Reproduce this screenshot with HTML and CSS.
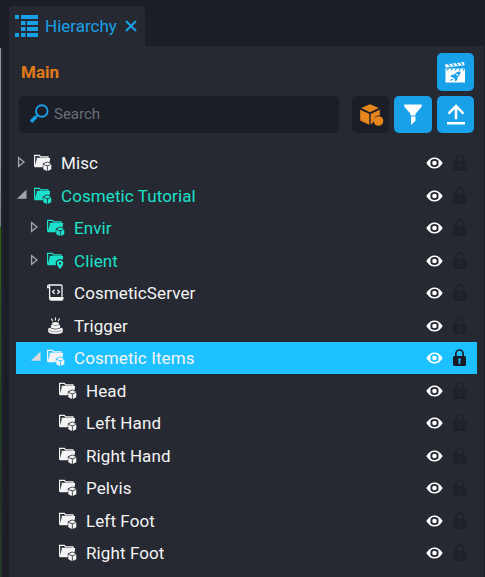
FILE: index.html
```html
<!DOCTYPE html>
<html lang="en">
<head>
<meta charset="utf-8">
<title>Hierarchy</title>
<link rel="stylesheet" href="styles.css">
</head>
<body>
<svg class="defs" aria-hidden="true">
  <symbol id="folder" viewBox="0 0 18 18">
    <path d="M.6 12.500V1.300h4.800l1.200 1.500h7.400v1.500" fill="none" stroke="currentColor" stroke-width="1.200"/>
    <path d="M3.200 4.100h13l-.7 4.300-2.400-.9-4.300 1.900v3.900H.5z" fill="currentColor"/>
    <path d="M2.500 3.800h11.500v1H3.200v2z" fill="currentColor"/>
  </symbol>
  <symbol id="folder-cube" viewBox="0 0 18 18">
    <use href="#folder"/>
    <path d="M13.300 8.300l3.800 1.600-3.800 1.700-3.800-1.700zM9.300 10.600l3.600 1.700v4.700l-3.600-1.800zM17.300 10.600l-3.600 1.700v4.700l3.600-1.800z" fill="currentColor"/>
  </symbol>
  <symbol id="folder-pin" viewBox="0 0 18 18">
    <use href="#folder"/>
    <path d="M13 7.200a4 4 0 0 1 4 4c0 2.500-4 6.500-4 6.500s-4-4-4-6.500a4 4 0 0 1 4-4z" fill="#262932"/>
    <path fill-rule="evenodd" d="M13 8.300a3.200 3.200 0 0 1 3.200 3.200c0 2-3.200 5.500-3.200 5.500s-3.200-3.500-3.200-5.500A3.200 3.200 0 0 1 13 8.300zm0 2a1.100 1.100 0 1 0 0 2.200 1.100 1.100 0 0 0 0-2.200z" fill="currentColor"/>
  </symbol>
  <symbol id="script" viewBox="0 0 18 18">
    <path d="M2.500 3.500H.7V2.300Q.7 1 2.200 1h11.600q1.200 0 1.200 1.300v10.500M2.600 2v12" fill="none" stroke="currentColor" stroke-width="1.300"/>
    <path d="M3.200 12.900h13.300v1.800q0 2.100-2 2.100H4.300q-2.200 0-2.200-2.100v-2z" fill="currentColor"/>
    <path d="M7.700 5.700L5.600 7.800l2.100 2.100M10.300 5.700l2.100 2.100-2.100 2.100" fill="none" stroke="currentColor" stroke-width="1.300"/>
  </symbol>
  <symbol id="trigger" viewBox="0 0 18 18">
    <path d="M8.500.5v3M4.300 1.500l1.600 2.600M12.700 1.500l-1.600 2.600" stroke="currentColor" stroke-width="1.100"/>
    <ellipse cx="8.500" cy="6.500" rx="3.500" ry="1.500" fill="currentColor"/>
    <path d="M4.300 7.600q4.200 1.800 8.400 0l.6 2.800q-4.800 2.700-9.600 0z" fill="currentColor"/>
    <path d="M2.700 10.700q5.800 3.500 11.600 0 1.700.7 1.700 2.100v.9q0 3.300-7.500 3.300T1 13.700v-.9q0-1.400 1.700-2.100z" fill="currentColor"/>
    <path d="M1.500 13.200q7 3.300 14 0" stroke="#262932" stroke-width=".4" fill="none"/>
  </symbol>
  <symbol id="closed" viewBox="0 0 10 12">
    <path d="M1.600 1.700v8.600L7 6z" fill="none" stroke="currentColor" stroke-width="1.300"/>
  </symbol>
  <symbol id="open" viewBox="0 0 10 12"><path d="M9.500.6v9.200H0z" fill="currentColor"/></symbol>
  <symbol id="eye" viewBox="0 0 17 12">
    <path fill-rule="evenodd" d="M.3 6Q3.500.4 8.500.4T16.700 6q-3.200 5.600-8.200 5.600T.3 6zM8.500 2.100Q4.900 2.100 2.600 6q2.300 3.900 5.900 3.900T14.400 6Q12.100 2.100 8.500 2.100z" fill="currentColor"/>
    <path d="M4.800 3.200Q2.500 4.500 1.500 6q1 1.500 3.300 2.800-.9-2.800 0-5.600zM12.200 3.200Q14.500 4.500 15.500 6q-1 1.500-3.300 2.800.9-2.800 0-5.600z" fill="currentColor"/>
    <circle cx="8.500" cy="6" r="2.300" fill="currentColor"/>
  </symbol>
  <symbol id="lock" viewBox="0 0 13 18">
    <path d="M2.900 8V4.600a3.600 3.600 0 0 1 7.200 0V8" fill="none" stroke="currentColor" stroke-width="1.700"/>
    <path fill-rule="evenodd" d="M1.500 7h10Q13 7 13 8.500v7q0 1.500-1.500 1.500h-10Q0 17 0 15.500v-7Q0 7 1.500 7zm5 2.300a1.400 1.400 0 0 0-.8 2.500v3.300h1.600v-3.300a1.400 1.400 0 0 0-.8-2.500z" fill="currentColor"/>
  </symbol>
</svg>

<div class="window">
  <div class="viewport"></div>
  <main class="dock">
    <div class="tab">
      <svg class="tab-icon" viewBox="0 0 23 22" fill="currentColor"><path d="M0 0h4v4H0zM6 0h17v4H6zM6 6h4.500v4H6zM12 6h11v4H12zM6 12h4.500v4H6zM12 12h11v4H12zM0 18h4v4H0zM6 18h4.500v4H6zM12 18h11v4H12z"/></svg>
      <span>Hierarchy</span>
      <svg class="close" viewBox="0 0 12 12"><path d="M1 1l10 10M11 1L1 11" stroke="currentColor" stroke-width="2"/></svg>
    </div>
    <section class="panel">
      <header class="heading">
        <h1>Main</h1>
        <button class="button" aria-label="Scenes"><svg width="21" height="21" viewBox="0 0 21 21">
          <path d="M0 2.500L19 0l.5 3.300L.5 5.500zM.5 6.500H20V20.500H.5z" fill="#fff"/>
          <path d="M3 1.900l2.500 2.700M7 1.300l2.500 2.800M11 .8l2.500 2.800M15 .3l2.500 2.800M3.500 6.300L2 8.500M7.500 6.300L6 8.500M11.500 6.300L10 8.500M15.500 6.300L14 8.500M19.500 6.300L18 8.500" stroke="#18a0e8" stroke-width="1.100"/>
          <path d="M15.500 9.500q-4-.2-6 3l-2.800.3-1.500 2.200 2.700.2 1.900 1.800.2 2.500 2.300-1.600.2-2.700q3-2 3-5.700zM7 16.500L4.500 19l2.800-.7 1-1z" fill="#18a0e8"/><circle cx="12.300" cy="12.800" r="1" fill="#fff"/>
        </svg></button>
      </header>
      <div class="toolbar">
        <label class="search">
          <svg width="20" height="20" viewBox="0 0 20 20" fill="none" stroke="#18a0e8"><circle cx="12.800" cy="7" r="5.800" stroke-width="1.900"/><path d="M8.500 11.300l-2 2" stroke-width="1.700"/><path d="M7 12.700l-5 5" stroke-width="3.500"/></svg>
          <span>Search</span>
        </label>
        <button class="button muted" aria-label="Objects"><svg width="24" height="23" viewBox="0 0 24 23" fill="#e8861c"><path d="M10 .2l8.800 3.900L10 8.200 1.200 4.100zM.2 5.700L9.300 10v10.800L.2 16.500zM19.800 5.700v5.600q-5.800-.3-6.200 6.400l-2.900 3V10z"/><circle cx="18.500" cy="17" r="4.800"/></svg></button>
        <button class="button" aria-label="Filter"><svg width="18" height="21" viewBox="0 0 18 21" fill="#fff"><path d="M.3.500h17.400v2.200L11.500 9.800v1.600h-5V9.800L.3 2.700zM7 12.500h4.500v4.300L7.500 20.500H7z"/></svg></button>
        <button class="button" aria-label="Upload"><svg width="18" height="21" viewBox="0 0 18 21" fill="none" stroke="#fff" stroke-width="2.500"><path d="M9 15.300V2.200M1.500 9.600L9 2.100l7.500 7.500M0 19.200h18"/></svg></button>
      </div>
      <ul class="tree">
        <li class="row"><svg class="arrow"><use href="#closed"/></svg><svg class="kind"><use href="#folder-cube"/></svg><span class="name">Misc</span><svg class="eye"><use href="#eye"/></svg><svg class="lock"><use href="#lock"/></svg></li>
        <li class="row network"><svg class="arrow"><use href="#open"/></svg><svg class="kind"><use href="#folder-cube"/></svg><span class="name">Cosmetic Tutorial</span><svg class="eye"><use href="#eye"/></svg><svg class="lock"><use href="#lock"/></svg></li>
        <li class="row child network"><svg class="arrow"><use href="#closed"/></svg><svg class="kind"><use href="#folder-cube"/></svg><span class="name">Envir</span><svg class="eye"><use href="#eye"/></svg><svg class="lock"><use href="#lock"/></svg></li>
        <li class="row child network"><svg class="arrow"><use href="#closed"/></svg><svg class="kind"><use href="#folder-pin"/></svg><span class="name">Client</span><svg class="eye"><use href="#eye"/></svg><svg class="lock"><use href="#lock"/></svg></li>
        <li class="row child"><span class="arrow"></span><svg class="kind"><use href="#script"/></svg><span class="name">CosmeticServer</span><svg class="eye"><use href="#eye"/></svg><svg class="lock"><use href="#lock"/></svg></li>
        <li class="row child"><span class="arrow"></span><svg class="kind"><use href="#trigger"/></svg><span class="name">Trigger</span><svg class="eye"><use href="#eye"/></svg><svg class="lock"><use href="#lock"/></svg></li>
        <li class="row child selected"><svg class="arrow"><use href="#open"/></svg><svg class="kind"><use href="#folder-cube"/></svg><span class="name">Cosmetic Items</span><svg class="eye"><use href="#eye"/></svg><svg class="lock"><use href="#lock"/></svg></li>
        <li class="row leaf"><span class="arrow"></span><svg class="kind"><use href="#folder-cube"/></svg><span class="name">Head</span><svg class="eye"><use href="#eye"/></svg><svg class="lock"><use href="#lock"/></svg></li>
        <li class="row leaf"><span class="arrow"></span><svg class="kind"><use href="#folder-cube"/></svg><span class="name">Left Hand</span><svg class="eye"><use href="#eye"/></svg><svg class="lock"><use href="#lock"/></svg></li>
        <li class="row leaf"><span class="arrow"></span><svg class="kind"><use href="#folder-cube"/></svg><span class="name">Right Hand</span><svg class="eye"><use href="#eye"/></svg><svg class="lock"><use href="#lock"/></svg></li>
        <li class="row leaf"><span class="arrow"></span><svg class="kind"><use href="#folder-cube"/></svg><span class="name">Pelvis</span><svg class="eye"><use href="#eye"/></svg><svg class="lock"><use href="#lock"/></svg></li>
        <li class="row leaf"><span class="arrow"></span><svg class="kind"><use href="#folder-cube"/></svg><span class="name">Left Foot</span><svg class="eye"><use href="#eye"/></svg><svg class="lock"><use href="#lock"/></svg></li>
        <li class="row leaf"><span class="arrow"></span><svg class="kind"><use href="#folder-cube"/></svg><span class="name">Right Foot</span><svg class="eye"><use href="#eye"/></svg><svg class="lock"><use href="#lock"/></svg></li>
      </ul>
    </section>
  </main>
</div>
</body>
</html>
```
FILE: styles.css
```css
* { box-sizing: border-box; }
body { margin: 0; background: #1b1e27; color: #f4f4f5; font: 17px/32px Roboto, sans-serif; overflow: hidden; }
svg { display: block; flex: none; }
.defs { position: absolute; width: 0; height: 0; }
.window { display: flex; height: 577px; }
.viewport {
  flex: none;
  width: 3px;
  height: 529px;
  margin: 48px 6px 0 0;
  border-right: 2px solid #23262f;
  background: linear-gradient(#8f9199 0 120px, #777982 178px, #2c6512 179px, #28501b 300px, #203c19 450px, #27451c);
}
.dock { flex: none; width: 475px; padding-top: 6px; }
.tab {
  display: flex;
  align-items: center;
  width: 136px;
  height: 40px;
  padding-left: 6px;
  border-radius: 4px 4px 0 0;
  background: #262932;
  color: #18a0e8;
}
.tab-icon { width: 23px; height: 22px; margin-right: 7px; }
.tab span { width: 72px; white-space: nowrap; }
.close { width: 12px; height: 12px; margin-left: 8px; }
.panel { height: 531px; padding: 7px 7px 0; background: #262932; }
.heading { display: flex; justify-content: space-between; height: 43px; padding: 0 3px 0 5px; }
h1 { margin: 3px 0 0; color: #e07b18; font-size: 17px; font-weight: 700; line-height: 32px; }
.button {
  display: flex;
  flex: none;
  align-items: center;
  justify-content: center;
  width: 37px;
  height: 38px;
  padding: 0;
  border: 0;
  border-radius: 5px;
  background: #18a0e8;
}
.toolbar { display: flex; gap: 5px; padding: 0 3px; }
.toolbar .button { height: 37px; }
.toolbar .button:nth-of-type(2) { width: 38px; }
.toolbar .muted { background: #1b1e27; }
.toolbar .muted svg { margin: 1px 0 0 2px; }
.search {
  display: flex;
  align-items: center;
  width: 320px;
  height: 37px;
  margin-right: 8px;
  padding-left: 10px;
  border-radius: 5px;
  background: #1b1e27;
  color: #6a6d75;
  font-size: 15px;
}
.search svg { margin: -2px 5px 0 0; }
.search span { margin-top: -2px; }
.tree { margin: 14px 0 0; padding: 0; list-style: none; }
.row { display: flex; align-items: center; height: 32px; margin-bottom: .5px; padding: 0 11px 0 2px; }
.child { padding-left: 15px; }
.leaf { padding-left: 27px; }
.arrow { width: 10px; height: 12px; margin: -2px 6px 0 -.5px; color: #a4a5a8; }
.kind { width: 18px; height: 18px; margin-right: 9.5px; }
.name { flex: 1; white-space: nowrap; letter-spacing: .1px; }
.network .arrow, .row:first-child .arrow { margin-left: -1px; margin-right: 6.5px; }
.network .kind, .network .name { color: #1de0cb; }
.eye { width: 17px; height: 12px; margin-right: 10px; color: #fff; }
.lock { width: 13px; height: 18px; color: #1e212a; }
.selected { background: #1dc1ff; }
.selected .arrow { color: #d9d9da; }
.selected .lock { color: #181b24; }
```
